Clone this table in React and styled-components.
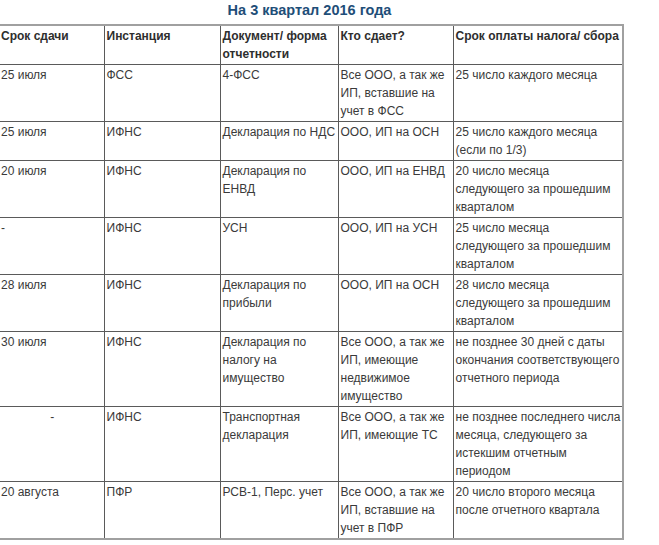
import React from 'react';
import styled, { createGlobalStyle } from 'styled-components';

const GlobalStyle = createGlobalStyle`
  html, body {
    margin: 0;
    padding: 0;
    background: #fff;
  }
  body {
    font-family: "Liberation Sans", Arial, sans-serif;
  }
`;

const Page = styled.div`
  width: 625px;
  margin-left: -3px;
`;

const Title = styled.h3`
  margin: 0;
  height: 24px;
  line-height: 20px;
  text-align: center;
  font-size: 14.5px;
  font-weight: bold;
  color: #1e4e78;
`;

const Table = styled.table`
  width: 625px;
  border-collapse: collapse;
  border: 2px solid #a0a0a0;
  table-layout: fixed;
  font-size: 12px;
  line-height: 18px;
  color: #3a3a3a;
`;

const Cell = styled.td`
  border: 1px solid #5a5a5a;
  padding: 1px 0 1px 2px;
  vertical-align: top;
  white-space: pre-line;
  text-align: ${p => (p.$center ? 'center' : 'left')};
  font-weight: ${p => (p.$head ? 'bold' : 'normal')};
  color: ${p => (p.$head ? '#2e2e2e' : '#3a3a3a')};
  overflow: hidden;
`;

const widths = [106, 116, 118, 115, 170];

const header = [
  'Срок сдачи',
  'Инстанция',
  'Документ/ форма\nотчетности',
  'Кто сдает?',
  'Срок оплаты налога/ сбора',
];

// line breaks follow the source table
const rows = [
  ['25 июля', 'ФСС', '4-ФСС', 'Все ООО, а так же\nИП, вставшие на\nучет в ФСС', '25 число каждого месяца'],
  ['25 июля', 'ИФНС', 'Декларация по НДС', 'ООО, ИП на ОСН', '25 число каждого месяца\n(если по 1/3)'],
  ['20 июля', 'ИФНС', 'Декларация по\nЕНВД', 'ООО, ИП на ЕНВД', '20 число месяца\nследующего за прошедшим\nкварталом'],
  ['-', 'ИФНС', 'УСН', 'ООО, ИП на УСН', '25 число месяца\nследующего за прошедшим\nкварталом'],
  ['28 июля', 'ИФНС', 'Декларация по\nприбыли', 'ООО, ИП на ОСН', '28 число месяца\nследующего за прошедшим\nкварталом'],
  ['30 июля', 'ИФНС', 'Декларация по\nналогу на\nимущество', 'Все ООО, а так же\nИП, имеющие\nнедвижимое\nимущество', 'не позднее 30 дней с даты\nокончания соответствующего\nотчетного периода'],
  ['-', 'ИФНС', 'Транспортная\nдекларация', 'Все ООО, а так же\nИП, имеющие ТС', 'не позднее последнего числа\nмесяца, следующего за\nистекшим отчетным\nпериодом'],
  ['20 августа', 'ПФР', 'РСВ-1, Перс. учет', 'Все ООО, а так же\nИП, вставшие на\nучет в ПФР', '20 число второго месяца\nпосле отчетного квартала'],
];

// the second dash row is centred in the source table
const centeredRow = 6;

export default function App() {
  return (
    <Page>
      <GlobalStyle />
      <Title>На 3 квартал 2016 года</Title>
      <Table>
        <colgroup>
          {widths.map((w, i) => (
            <col key={i} style={{ width: w }} />
          ))}
        </colgroup>
        <thead>
          <tr>
            {header.map(h => (
              <Cell as="th" key={h} $head>{h}</Cell>
            ))}
          </tr>
        </thead>
        <tbody>
          {rows.map((cells, i) => (
            <tr key={i}>
              {cells.map((c, j) => (
                <Cell key={j} $center={i === centeredRow && j === 0}>{c}</Cell>
              ))}
            </tr>
          ))}
        </tbody>
      </Table>
    </Page>
  );
}
